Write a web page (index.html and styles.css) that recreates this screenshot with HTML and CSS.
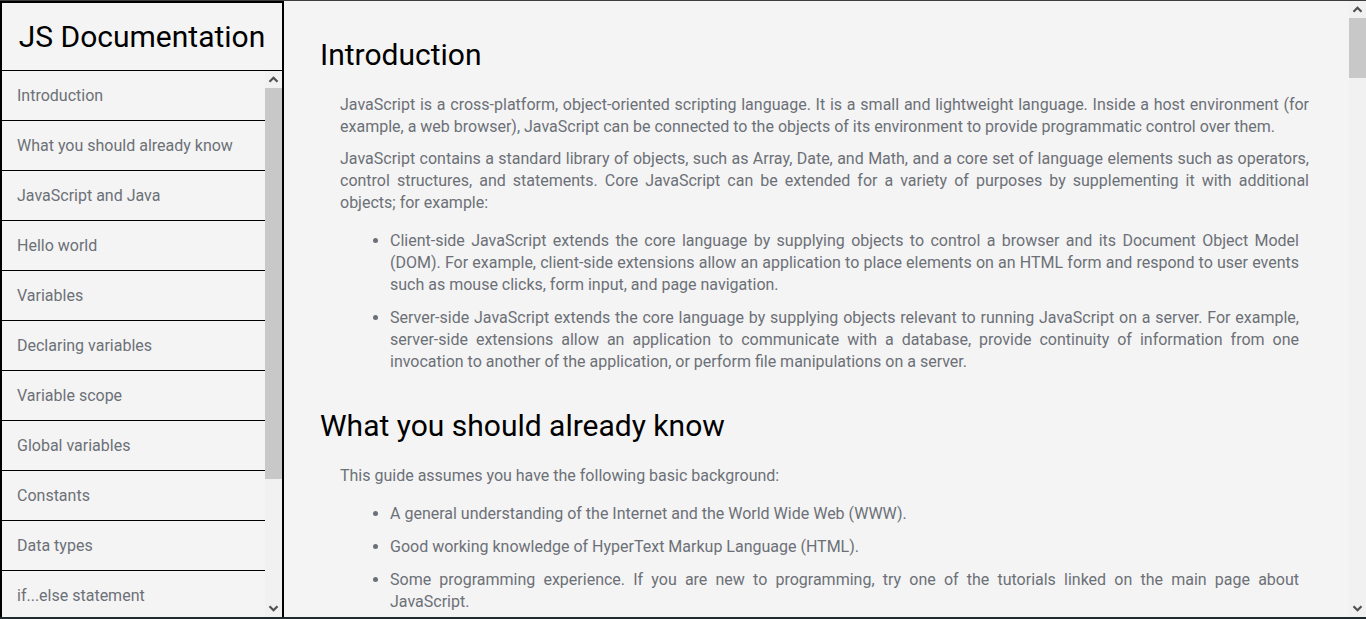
FILE: index.html
```html
<!DOCTYPE html>
<html lang="en">
<head>
<meta charset="utf-8">
<title>JS Documentation</title>
<link rel="stylesheet" href="styles.css">
</head>
<body>
<div class="frame">
  <nav class="navbar">
    <header class="nav-title">JS Documentation</header>
    <div class="nav-body">
      <ul class="nav-list">
        <li><a class="nav-link" href="#Introduction">Introduction</a></li>
        <li><a class="nav-link" href="#What_you_should_already_know">What you should already know</a></li>
        <li><a class="nav-link" href="#JavaScript_and_Java">JavaScript and Java</a></li>
        <li><a class="nav-link" href="#Hello_world">Hello world</a></li>
        <li><a class="nav-link" href="#Variables">Variables</a></li>
        <li><a class="nav-link" href="#Declaring_variables">Declaring variables</a></li>
        <li><a class="nav-link" href="#Variable_scope">Variable scope</a></li>
        <li><a class="nav-link" href="#Global_variables">Global variables</a></li>
        <li><a class="nav-link" href="#Constants">Constants</a></li>
        <li><a class="nav-link" href="#Data_types">Data types</a></li>
        <li><a class="nav-link" href="#if...else_statement">if...else statement</a></li>
        <li><a class="nav-link" href="#while_statement">while statement</a></li>
        <li><a class="nav-link" href="#Function_declarations">Function declarations</a></li>
        <li><a class="nav-link" href="#Reference">Reference</a></li>
      </ul>
      <div class="scrollbar" aria-hidden="true">
        <span class="sb-btn"><svg width="17" height="17" viewBox="0 0 17 17"><path d="M4.5 10.8 L8.5 6.8 L12.5 10.8" fill="none" stroke="#505050" stroke-width="2.2"/></svg></span>
        <div class="sb-track"><div class="sb-thumb sb-thumb-nav"></div></div>
        <span class="sb-btn"><svg width="17" height="17" viewBox="0 0 17 17"><path d="M4.5 6.2 L8.5 10.2 L12.5 6.2" fill="none" stroke="#505050" stroke-width="2.2"/></svg></span>
      </div>
    </div>
  </nav>
  <div class="main-wrap">
  <main class="main">
    <section class="section" id="Introduction">
      <h1 class="section-title">Introduction</h1>
      <p>JavaScript is a cross-platform, object-oriented scripting language. It is a small and lightweight language. Inside a host environment (for example, a web browser), JavaScript can be connected to the objects of its environment to provide programmatic control over them.</p>
      <p>JavaScript contains a standard library of objects, such as Array, Date, and Math, and a core set of language elements such as operators, control structures, and statements. Core JavaScript can be extended for a variety of purposes by supplementing it with additional objects; for example:</p>
      <ul>
        <li>Client-side JavaScript extends the core language by supplying objects to control a browser and its Document Object Model (DOM). For example, client-side extensions allow an application to place elements on an HTML form and respond to user events such as mouse clicks, form input, and page navigation.</li>
        <li>Server-side JavaScript extends the core language by supplying objects relevant to running JavaScript on a server. For example, server-side extensions allow an application to communicate with a database, provide continuity of information from one invocation to another of the application, or perform file manipulations on a server.</li>
      </ul>
    </section>
    <section class="section" id="What_you_should_already_know">
      <h1 class="section-title">What you should already know</h1>
      <p>This guide assumes you have the following basic background:</p>
      <ul>
        <li>A general understanding of the Internet and the World Wide Web (WWW).</li>
        <li>Good working knowledge of HyperText Markup Language (HTML).</li>
        <li>Some programming experience. If you are new to programming, try one of the tutorials linked on the main page about JavaScript.</li>
      </ul>
    </section>
    <section class="section" id="JavaScript_and_Java">
      <h1 class="section-title">JavaScript and Java</h1>
      <p>JavaScript and Java are similar in some ways but fundamentally different in some others. The JavaScript language resembles Java but does not have Java's static typing and strong type checking. JavaScript follows most Java expression syntax, naming conventions and basic control-flow constructs which was the reason why it was renamed from LiveScript to JavaScript.</p>
      <p>In contrast to Java's compile-time system of classes built by declarations, JavaScript supports a runtime system based on a small number of data types representing numeric, Boolean, and string values. JavaScript has a prototype-based object model instead of the more common class-based object model.</p>
    </section>
    <section class="section" id="Hello_world">
      <h1 class="section-title">Hello world</h1>
      <p>To get started with writing JavaScript, open the Scratchpad and write your first "Hello world" JavaScript code:</p>
      <pre class="code">function greetMe(yourName) { alert("Hello " + yourName); }
greetMe("World");</pre>
    </section>
  </main>
  <div class="scrollbar" aria-hidden="true">
    <span class="sb-btn"><svg width="17" height="17" viewBox="0 0 17 17"><path d="M4.5 10.8 L8.5 6.8 L12.5 10.8" fill="none" stroke="#505050" stroke-width="2.2"/></svg></span>
    <div class="sb-track"><div class="sb-thumb sb-thumb-main"></div></div>
    <span class="sb-btn"><svg width="17" height="17" viewBox="0 0 17 17"><path d="M4.5 6.2 L8.5 10.2 L12.5 6.2" fill="none" stroke="#505050" stroke-width="2.2"/></svg></span>
  </div>
  </div>
</div>
</body>
</html>
```
FILE: styles.css
```css
* {
  box-sizing: border-box;
}

html,
body {
  margin: 0;
  padding: 0;
  height: 619px;
  overflow: hidden;
}

body {
  background: #1f2b2f;
  font-family: Roboto, "Noto Sans", "Liberation Sans", sans-serif;
}

.frame {
  display: flex;
  height: 617px;
  border-top: 1px solid #3d3d3d;
  background: #f4f4f4;
}

/* drawn scrollbars */
.scrollbar {
  flex: 0 0 17px;
  width: 17px;
  display: flex;
  flex-direction: column;
  background: #f1f1f1;
}

.sb-btn {
  flex: 0 0 17px;
  height: 17px;
  display: block;
}

.sb-btn svg {
  display: block;
}

.sb-track {
  flex: 1 1 auto;
  min-height: 0;
}

.sb-thumb {
  background: #c8c8c8;
}

.sb-thumb-nav {
  height: 391px;
}

.sb-thumb-main {
  height: 60px;
}

.navbar {
  flex: 0 0 284px;
  display: flex;
  flex-direction: column;
  border: 2px solid #000;
  border-bottom: none;
  background: #f4f4f4;
  min-height: 0;
}

.nav-title {
  flex: 0 0 auto;
  height: 68px;
  display: flex;
  align-items: center;
  justify-content: center;
  font-size: 30px;
  color: #000;
  border-bottom: 1px solid #000;
}

.nav-body {
  flex: 1 1 auto;
  min-height: 0;
  display: flex;
}

.nav-list {
  flex: 1 1 auto;
  min-width: 0;
  overflow: hidden;
  margin: 0;
  padding: 0;
  list-style: none;
}

.nav-list li {
  border-bottom: 1px solid #000;
}

.nav-link {
  display: flex;
  align-items: center;
  height: 49px;
  padding-left: 15px;
  font-size: 16px;
  color: #6c7077;
  text-decoration: none;
}

.main-wrap {
  flex: 1 1 auto;
  min-width: 0;
  display: flex;
}

.main {
  flex: 1 1 auto;
  min-width: 0;
  overflow: hidden;
  padding: 36px 40px 0 36px;
  color: #6c7077;
  font-size: 16px;
  line-height: 22px;
}

.section {
  padding-bottom: 19px;
}

.section-title {
  margin: 0 0 22px 0;
  font-size: 30px;
  font-weight: 400;
  line-height: 35px;
  color: #000;
}

.section p {
  margin: 10px 0 10px 20px;
  text-align: justify;
}

.section-title + p {
  margin-top: 0;
}

.section ul {
  margin: 16px 10px 16px 20px;
  padding-left: 50px;
  text-align: justify;
}

.section li {
  margin-bottom: 11px;
}

.code {
  margin: 10px 0 10px 20px;
  padding: 15px 20px;
  background: #ebebeb;
  border-radius: 4px;
  font-family: "Liberation Mono", monospace;
  font-size: 14px;
  line-height: 20px;
  color: #333;
  white-space: pre-wrap;
}
```
